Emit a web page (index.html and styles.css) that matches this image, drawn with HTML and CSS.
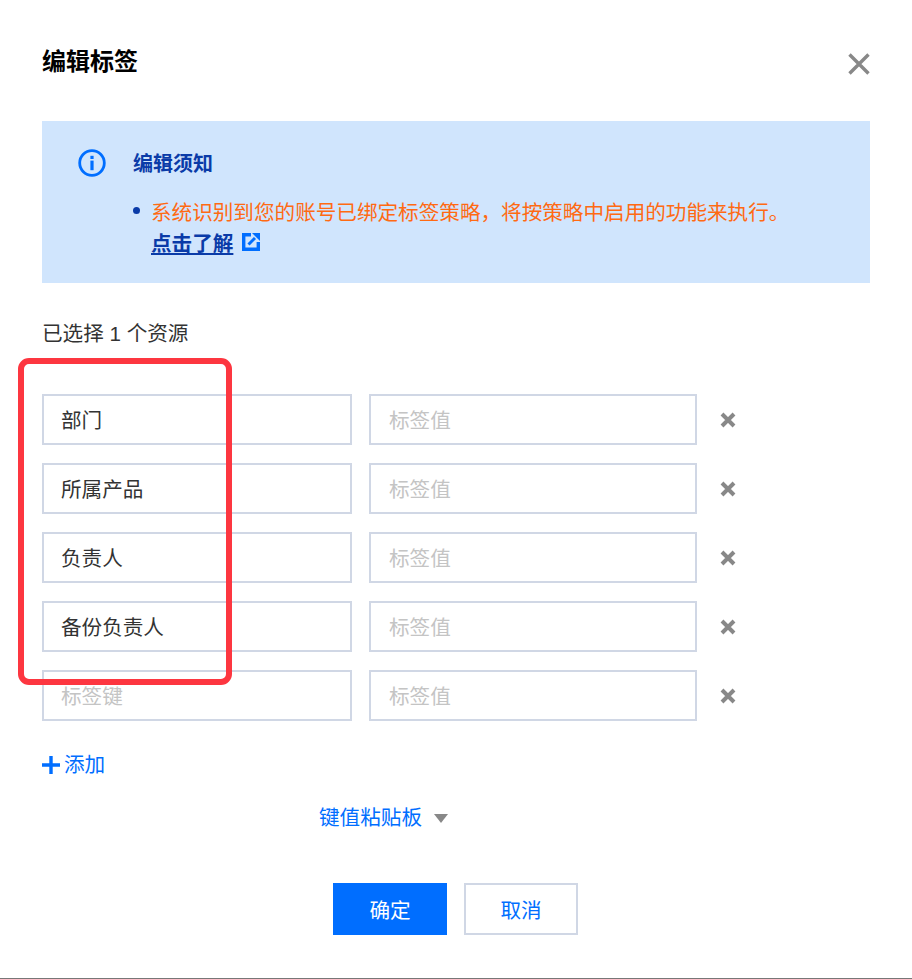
FILE: index.html
```html
<!DOCTYPE html>
<html lang="zh-cmn-Hans">
<head>
    <meta charset="UTF-8">
    <title>编辑标签</title>
    <link rel="stylesheet" href="styles.css">
</head>
<body>
    <div class="dialog">
        <div class="dialog-head">
            <h3 class="dialog-title">编辑标签</h3>
            <svg class="dialog-close" width="24" height="24" viewBox="0 0 24 24">
                <path d="M2.500 2.500L21.500 21.500M21.500 2.500L2.500 21.500" stroke="#888" stroke-width="3.4" fill="none"/>
            </svg>
        </div>

        <div class="notice">
            <svg class="notice-icon" width="28" height="28" viewBox="0 0 28 28">
                <circle cx="14" cy="14" r="12.3" stroke="#006eff" stroke-width="2.8" fill="none"/>
                <rect x="12.4" y="6.8" width="3.2" height="3.2" fill="#006eff"/>
                <rect x="12.4" y="11.6" width="3.2" height="9.6" fill="#006eff"/>
            </svg>
            <div class="notice-body">
                <div class="notice-title">编辑须知</div>
                <div class="notice-item">
                    <span class="notice-dot"></span>
                    <div class="notice-text">
                        <span class="notice-warn">系统识别到您的账号已绑定标签策略，将按策略中启用的功能来执行。</span>
                        <div class="notice-link-row">
                            <a class="notice-link">点击了解</a>
                            <svg class="notice-link-icon" width="18" height="18" viewBox="0 0 18 18">
                                <path d="M9 1.700H1.700V16.300H16.300V9" stroke="#006eff" stroke-width="3.400" fill="none"/>
                                <path d="M6.500 11.500L13 5" stroke="#006eff" stroke-width="3" fill="none"/>
                                <path d="M10 0H18V8Z" fill="#006eff"/>
                            </svg>
                        </div>
                    </div>
                </div>
            </div>
        </div>

        <div class="selected">已选择 1 个资源</div>

        <div class="tag-rows">
            <div class="tag-row">
                <div class="field field-key">部门</div>
                <div class="field field-value is-empty">标签值</div>
                <svg class="tag-del" width="16" height="16" viewBox="0 0 16 16"><path d="M2 2L14 14M14 2L2 14" stroke="#888" stroke-width="4" fill="none"/></svg>
            </div>
            <div class="tag-row">
                <div class="field field-key">所属产品</div>
                <div class="field field-value is-empty">标签值</div>
                <svg class="tag-del" width="16" height="16" viewBox="0 0 16 16"><path d="M2 2L14 14M14 2L2 14" stroke="#888" stroke-width="4" fill="none"/></svg>
            </div>
            <div class="tag-row">
                <div class="field field-key">负责人</div>
                <div class="field field-value is-empty">标签值</div>
                <svg class="tag-del" width="16" height="16" viewBox="0 0 16 16"><path d="M2 2L14 14M14 2L2 14" stroke="#888" stroke-width="4" fill="none"/></svg>
            </div>
            <div class="tag-row">
                <div class="field field-key">备份负责人</div>
                <div class="field field-value is-empty">标签值</div>
                <svg class="tag-del" width="16" height="16" viewBox="0 0 16 16"><path d="M2 2L14 14M14 2L2 14" stroke="#888" stroke-width="4" fill="none"/></svg>
            </div>
            <div class="tag-row">
                <div class="field field-key is-empty">标签键</div>
                <div class="field field-value is-empty">标签值</div>
                <svg class="tag-del" width="16" height="16" viewBox="0 0 16 16"><path d="M2 2L14 14M14 2L2 14" stroke="#888" stroke-width="4" fill="none"/></svg>
            </div>
        </div>

        <div class="add-row">
            <svg width="18" height="18" viewBox="0 0 18 18"><path d="M9 0V18M0 9H18" stroke="#006eff" stroke-width="3.4" fill="none"/></svg>
            <a class="add-link">添加</a>
        </div>

        <div class="paste-row">
            <a class="paste-link">键值粘贴板</a>
            <span class="paste-caret"></span>
        </div>

        <div class="dialog-foot">
            <button class="btn btn-primary">确定</button>
            <button class="btn">取消</button>
        </div>

        <div class="highlight"></div>
    </div>
</body>
</html>
```

FILE: styles.css
```css
html,body{
    margin: 0;
    height: 100%;
}
body{
    font-family: "Liberation Sans", "Noto Sans CJK SC", sans-serif;
    font-size: 20.6px;
    color: #333;
    background-color: #fff;
}
.dialog{
    position: relative;
    box-sizing: border-box;
    height: 979px;
    padding: 0 42px;
    border-bottom: 1px solid #777;
    overflow: hidden;
}
.dialog-head{
    display: flex;
    justify-content: space-between;
    align-items: flex-start;
    height: 121px;
}
.dialog-title{
    margin: 44px 0 0;
    font-size: 24px;
    line-height: 36px;
    font-weight: 700;
    color: #000;
}
.dialog-close{
    margin: 52px -1px 0 0;
}
.notice{
    display: flex;
    box-sizing: border-box;
    height: 162px;
    padding: 28px 0 0 36px;
    background-color: #d0e5fd;
}
.notice-icon{
    flex: none;
    margin-right: 27px;
}
.notice-title{
    margin-top: 1px;
    font-size: 20px;
    line-height: 28px;
    font-weight: 700;
    color: #0a3ba8;
}
.notice-item{
    display: flex;
    margin-top: 19px;
}
.notice-dot{
    flex: none;
    width: 7px;
    height: 7px;
    margin: 10px 11px 0 0;
    border-radius: 50%;
    background-color: #0a3ba8;
}
.notice-text{
    line-height: 31px;
}
.notice-warn{
    display: block;
    color: #ff6a13;
}
.notice-link-row{
    display: flex;
    align-items: center;
    gap: 9px;
}
.notice-link{
    font-weight: 700;
    color: #0a3ba8;
    text-decoration: underline;
}
.notice-link-icon{
    margin-top: -3px;
}
.selected{
    margin-top: 35px;
    line-height: 32px;
}
.tag-rows{
    margin-top: 44px;
}
.tag-row{
    display: flex;
    align-items: center;
    height: 51px;
    margin-bottom: 18px;
}
.field{
    box-sizing: border-box;
    height: 51px;
    padding: 0 18px;
    border: 2px solid #d0d7e5;
    line-height: 49px;
}
.field-key{
    width: 310px;
    padding-left: 17px;
}
.field-value{
    width: 328px;
    margin-left: 17px;
}
.is-empty{
    color: #c4c4c4;
}
.tag-del{
    margin-left: 23px;
}
.add-row{
    display: flex;
    align-items: center;
    gap: 4px;
    margin-top: 28px;
    line-height: 32px;
}
.add-link,
.paste-link{
    color: #006eff;
}
.paste-row{
    display: flex;
    justify-content: center;
    align-items: center;
    gap: 12px;
    margin-top: 21px;
    padding-right: 145px;
    line-height: 32px;
}
.paste-caret{
    width: 0;
    height: 0;
    border-left: 7px solid transparent;
    border-right: 7px solid transparent;
    border-top: 9px solid #888;
}
.dialog-foot{
    display: flex;
    justify-content: center;
    gap: 17px;
    margin-top: 49px;
    padding-right: 1px;
}
.btn{
    box-sizing: border-box;
    width: 114px;
    height: 52px;
    padding: 0;
    border: 2px solid #d0d7e5;
    background-color: #fff;
    color: #006eff;
    font-family: inherit;
    font-size: 20.6px;
}
.btn-primary{
    border-color: #006eff;
    background-color: #006eff;
    color: #fff;
}
.highlight{
    position: absolute;
    top: 358px;
    left: 18px;
    box-sizing: border-box;
    width: 214px;
    height: 327px;
    border: 6px solid #fd3640;
    border-radius: 11px;
}
```
